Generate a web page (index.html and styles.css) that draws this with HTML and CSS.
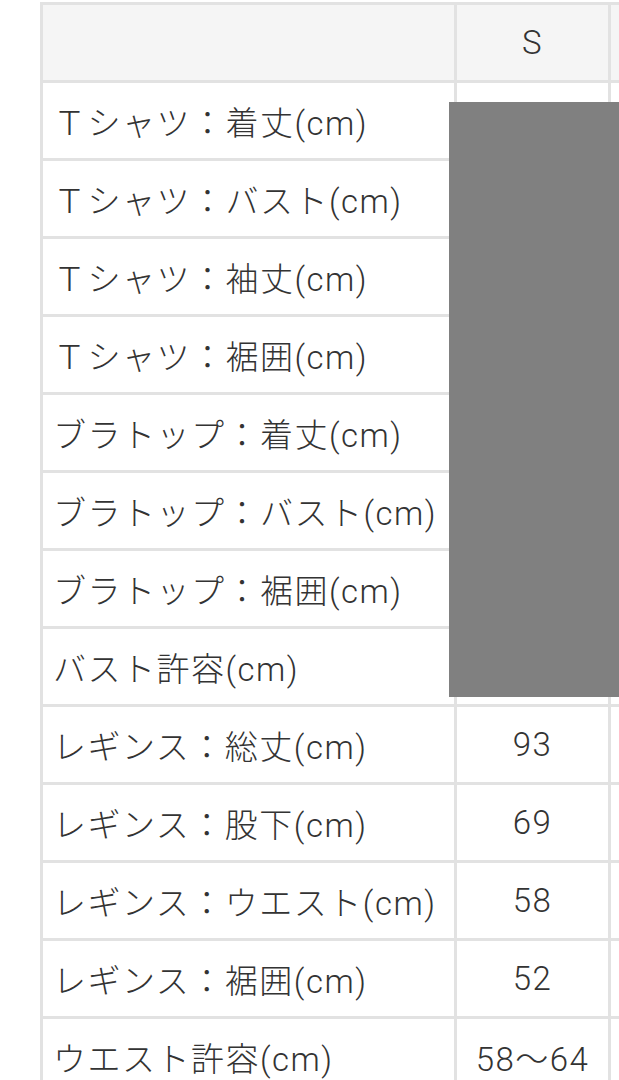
FILE: index.html
```html
<!DOCTYPE html>
<html lang="ja">

<head>
    <meta charset="UTF-8">
    <title>サイズ表</title>
    <link rel="stylesheet" href="styles.css">
</head>

<body>

    <div class="sheet">
        <table class="size-table">
            <colgroup>
                <col class="col-label">
                <col class="col-size">
                <col class="col-size">
            </colgroup>
            <thead>
                <tr>
                    <th class="label"></th>
                    <th>S</th>
                    <th></th>
                </tr>
            </thead>
            <tbody>
                <tr><td class="label">Ｔシャツ：着丈(cm)</td><td></td><td></td></tr>
                <tr><td class="label">Ｔシャツ：バスト(cm)</td><td></td><td></td></tr>
                <tr><td class="label">Ｔシャツ：袖丈(cm)</td><td></td><td></td></tr>
                <tr><td class="label">Ｔシャツ：裾囲(cm)</td><td></td><td></td></tr>
                <tr><td class="label">ブラトップ：着丈(cm)</td><td></td><td></td></tr>
                <tr><td class="label">ブラトップ：バスト(cm)</td><td></td><td></td></tr>
                <tr><td class="label">ブラトップ：裾囲(cm)</td><td></td><td></td></tr>
                <tr><td class="label">バスト許容(cm)</td><td></td><td></td></tr>
                <tr><td class="label">レギンス：総丈(cm)</td><td>93</td><td></td></tr>
                <tr><td class="label">レギンス：股下(cm)</td><td>69</td><td></td></tr>
                <tr><td class="label">レギンス：ウエスト(cm)</td><td>58</td><td></td></tr>
                <tr><td class="label">レギンス：裾囲(cm)</td><td>52</td><td></td></tr>
                <tr><td class="label">ウエスト許容(cm)</td><td>58〜64</td><td></td></tr>
            </tbody>
        </table>

        <!-- redacted block over the S column -->
        <div class="redact"></div>
    </div>

</body>

</html>
```

FILE: styles.css
```css
body {
    margin: 0;
    background: #fff;
    font-family: Roboto, 'Noto Sans CJK JP', sans-serif;
    color: #333;
    overflow: hidden;
}

.sheet {
    position: relative;
    padding: 2px 0 0 40px;
    width: 579px;
    height: 1078px;
    overflow: hidden;
}

.size-table {
    border-collapse: collapse;
    border: 3px solid #e2e2e2;
    font-size: 33px;
    font-weight: 300;
    letter-spacing: 1.5px;
    table-layout: fixed;
    width: 722px;
}

.col-label {
    width: 414px;
}

.col-size {
    width: 154px;
}

.size-table th,
.size-table td {
    border: 3px solid #e2e2e2;
    height: 75px;
    padding: 0;
    text-align: center;
    font-weight: 300;
    white-space: nowrap;
}

.size-table th {
    background: #f5f5f5;
}

.size-table .label {
    text-align: left;
    padding-left: 10px;
}

.redact {
    position: absolute;
    left: 449px;
    top: 102px;
    width: 200px;
    height: 595px;
    background: #808080;
}
```
